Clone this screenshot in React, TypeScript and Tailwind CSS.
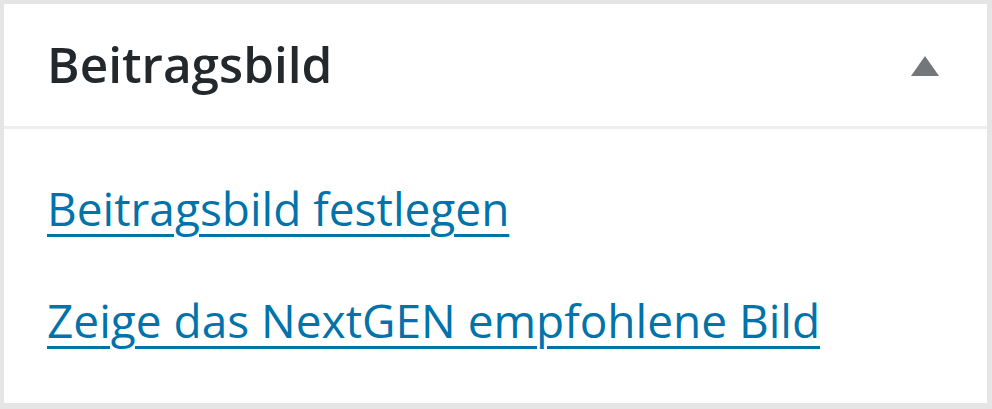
import React from "react";

const App: React.FC = () => {
  return (
    <div className="w-[992px] h-[409px] bg-[#e5e5e5] pt-[4px] pl-[4px] pr-[5px] pb-[6px]" style={{ fontFamily: '"Open Sans", sans-serif' }}>
      <div className="h-full bg-white flex flex-col">
        <div className="h-[125px] flex items-center justify-between pl-[43px] pr-[48px] border-b-[3px] border-[#eeeeee]">
          <h2 className="text-[49.5px] font-semibold text-[#23282d] leading-none">Beitragsbild</h2>
          <svg width="28" height="20" viewBox="0 0 28 20" className="text-[#72777c] mt-[2px]">
            <path d="M14 0 L28 20 L0 20 Z" fill="currentColor" />
          </svg>
        </div>
        <div className="flex flex-col pl-[43px] pt-[50px] gap-[54px]">
          <a href="#" className="text-[46px] leading-[58px] text-[#0073aa] underline decoration-[3px] underline-offset-[8px] self-start">
            Beitragsbild festlegen
          </a>
          <a href="#" className="text-[46px] leading-[58px] text-[#0073aa] underline decoration-[3px] underline-offset-[8px] self-start">
            Zeige das NextGEN empfohlene Bild
          </a>
        </div>
      </div>
    </div>
  );
};

export default App;
